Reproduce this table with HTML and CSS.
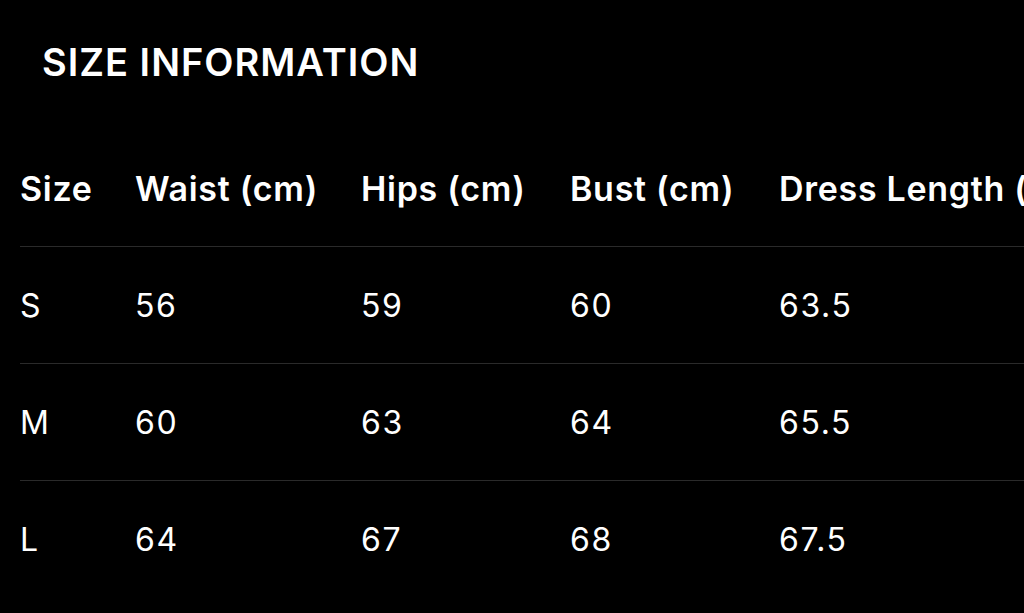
FILE: index.html
```html
<!DOCTYPE html>
<html lang="en">
<head>
<meta charset="utf-8">
<title>Size Information</title>
<link rel="stylesheet" href="styles.css">
</head>
<body>
<main class="page">
  <h1 class="title">SIZE INFORMATION</h1>
  <table class="size-table">
    <thead>
      <tr>
        <th class="c-size">Size</th>
        <th class="c-waist">Waist (cm)</th>
        <th class="c-hips">Hips (cm)</th>
        <th class="c-bust">Bust (cm)</th>
        <th class="c-len">Dress Length (cm)</th>
      </tr>
    </thead>
    <tbody>
      <tr><td>S</td><td>56</td><td>59</td><td>60</td><td>63.5</td></tr>
      <tr><td>M</td><td>60</td><td>63</td><td>64</td><td>65.5</td></tr>
      <tr class="last"><td>L</td><td>64</td><td>67</td><td>68</td><td>67.5</td></tr>
    </tbody>
  </table>
</main>
</body>
</html>
```

FILE: styles.css
```css
html, body {
  margin: 0;
  padding: 0;
  background: #000;
  overflow: hidden;
}

body {
  color: #fff;
  font-family: Inter, "Noto Sans", "Liberation Sans", sans-serif;
  width: 1024px;
  height: 613px;
}

.page {
  padding: 39px 0 0 20px;
}

.title {
  margin: 0 0 45px 22px;
  font-size: 38px;
  line-height: 46px;
  font-weight: 600;
  letter-spacing: 1px;
}

.size-table {
  border-collapse: collapse;
  white-space: nowrap;
  width: 1200px;
  table-layout: fixed;
}

.size-table th,
.size-table td {
  text-align: left;
  padding: 0;
  height: 116px;
  vertical-align: middle;
  border-bottom: 1px solid #2a2a2a;
}

.size-table th {
  font-size: 34px;
  font-weight: 600;
  letter-spacing: 0.7px;
}

.size-table td {
  font-size: 32px;
  font-weight: 400;
  letter-spacing: 1.6px;
}

.size-table tr.last td {
  border-bottom: none;
}

.c-size { width: 115px; }
.c-waist { width: 226px; }
.c-hips { width: 209px; }
.c-bust { width: 209px; }
.c-len { width: 441px; }
```
